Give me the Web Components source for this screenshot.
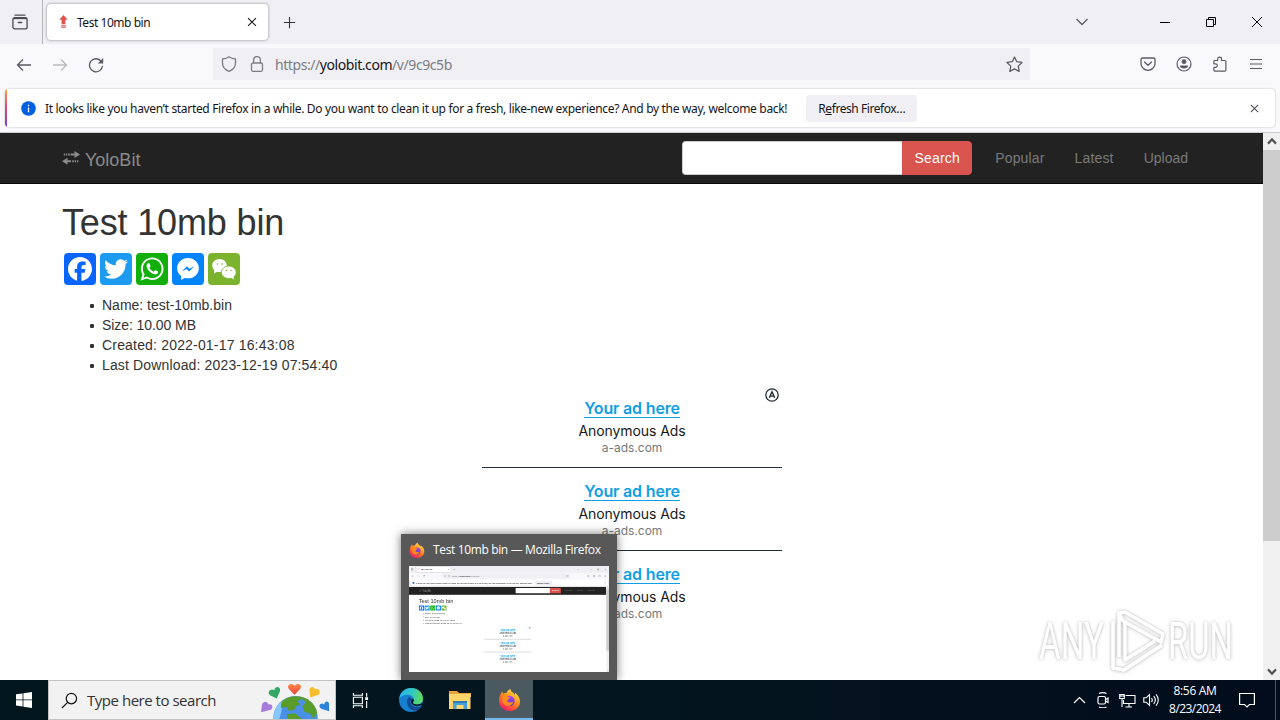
<!DOCTYPE html>
<html lang="en">
<head>
<meta charset="utf-8">
<title>Test 10mb bin</title>
<style>
    body { margin: 0; overflow: hidden; }
</style>
</head>
<body>
<win-desktop></win-desktop>

<script>
const FLAME = `
    <defs>
        <linearGradient id="a" x1=".8" y1="0" x2=".2" y2="1"><stop offset="0" stop-color="#fff04a"/><stop offset=".4" stop-color="#ff9a20"/><stop offset=".75" stop-color="#ff4a3c"/><stop offset="1" stop-color="#e31587"/></linearGradient>
        <linearGradient id="b" x1="0" y1="0" x2="0" y2="1"><stop offset="0" stop-color="#a34cf0"/><stop offset="1" stop-color="#5b36b8"/></linearGradient>
    </defs>
    <path fill="url(#a)" d="M2 8C3 6 3.500 4.600 4.600 3.400c0 1.300.4 2 1 2.500C7 5 8 5.200 8.700 5.200 9.800 3 11.500 2 13 .8c-.1 2.200 1.600 3.300 3.100 4.400.7.600 1.200 1.300 1.500 2.100.3-.9.200-1.700-.2-2.500 3.300 2.200 5.600 5.600 5.600 9.200C23 19.500 18.500 24 12 24S1 19.300 1 13.500C1 11.400 1.300 9.500 2 8z"/>
    <circle cx="12" cy="13.500" r="5.400" fill="url(#b)"/>
    <path fill="#ff8a1e" d="M4.500 9.500c2-1.700 4.300-1.400 5.700-.5 1 .7 2.300.8 2.500 1.300-.3 1-1.900 1.200-2.600 2-.5.900-.2 2 .9 2.500 2 .8 3.200-.6 4.900-.2-1 3.100-4 4.600-7 3.900-3.500-1-5.600-5-4.400-9z"/>`;

// name: [viewBox, markup]
const ICONS = {
    view: ["0 0 16 16", `<g fill="none" stroke="currentColor" stroke-width="1.300"><path d="M3 1.100h10" stroke-linecap="round"/><rect x=".9" y="3.700" width="14.200" height="11.200" rx="2"/><path d="M1 4.500h14"/><path d="M6.300 8.500h3.400" stroke-linecap="round"/></g>`],
    favicon: ["0 0 16 16", `<path fill="#d9534f" d="M8 1l4.500 5H10v5H6V6H3.500zM5.500 12h5v1.200h-5zM5.500 14h5v1h-5z"/>`],
    close: ["0 0 16 16", `<path d="M3.500 3.500l9 9m0-9l-9 9" stroke="currentColor" stroke-width="1.300"/>`],
    plus: ["0 0 16 16", `<path d="M8 2v12M2 8h12" stroke="currentColor" stroke-width="1.200"/>`],
    chevron: ["0 0 16 16", `<path d="M2.500 5l5.500 5.500L13.500 5" fill="none" stroke="currentColor" stroke-width="1.300"/>`],
    min: ["0 0 16 16", `<path d="M3 8.500h10" stroke="currentColor"/>`],
    restore: ["0 0 16 16", `<g fill="none" stroke="currentColor"><path d="M3.500 5.500h7v7h-7z"/><path d="M5.500 5.500v-2h7v7h-2"/></g>`],
    winclose: ["0 0 16 16", `<path d="M3 3l10 10m0-10L3 13" stroke="currentColor"/>`],
    back: ["0 0 16 16", `<path d="M15 8H1.500M7 2.500L1.500 8 7 13.500" fill="none" stroke="currentColor" stroke-width="1.300"/>`],
    forward: ["0 0 16 16", `<path d="M1 8h13.500M9 2.500L14.500 8 9 13.500" fill="none" stroke="currentColor" stroke-width="1.300"/>`],
    reload: ["0 0 16 16", `<path d="M13.400 4.600A6.500 6.500 0 1 0 14.500 8.700" fill="none" stroke="currentColor" stroke-width="1.300"/><path d="M15.200 1v5.500H9.700z" fill="currentColor"/>`],
    shield: ["0 0 16 16", `<path d="M8 .8C6.500 2 4 2.800 1.500 3v4c0 4 3 7 6.500 8.300C11.500 14 14.500 11 14.500 7V3C12 2.800 9.500 2 8 .8z" fill="none" stroke="currentColor" stroke-width="1.300" stroke-linejoin="round"/>`],
    lock: ["0 0 16 16", `<g fill="none" stroke="currentColor" stroke-width="1.300"><rect x="2.500" y="7" width="11" height="8.300" rx="1.500"/><path d="M4.600 7V4a3.400 3.400 0 0 1 6.800 0v3"/></g>`],
    star: ["0 0 16 16", `<path d="M8 .9l2.100 4.500 5 .7-3.600 3.400.9 5L8 12.100l-4.400 2.400.9-5L.9 6.100l5-.7z" fill="none" stroke="currentColor" stroke-width="1.200" stroke-linejoin="round"/>`],
    pocket: ["0 0 16 16", `<g fill="none" stroke="currentColor" stroke-width="1.300"><path d="M2.400 2h11.200c.8 0 1.400.6 1.400 1.400V7.500a7 6.800 0 0 1-14 0V3.400C1 2.600 1.600 2 2.400 2z"/><path d="M4.500 6l3.500 3.300L11.500 6" stroke-linecap="round"/></g>`],
    account: ["0 0 16 16", `<circle cx="8" cy="8" r="7" fill="none" stroke="currentColor" stroke-width="1.200"/><circle cx="8" cy="5.700" r="2.400" fill="currentColor"/><path d="M3.800 9.500h8.400c0 1.800-1.800 3-4.200 3s-4.200-1.200-4.200-3z" fill="currentColor"/>`],
    puzzle: ["0 0 16 16", `<path d="M2 4.500h3.700V3a1.900 1.900 0 0 1 3.800 0v1.500h3.300c.6 0 1.100.5 1.100 1.100V14c0 .6-.5 1.100-1.100 1.100H3c-.6 0-1.100-.5-1.100-1.100v-2.600h1.600a1.800 1.800 0 0 0 0-3.600H1.900V4.500" fill="none" stroke="currentColor" stroke-width="1.200" stroke-linejoin="round"/>`],
    menu: ["0 0 16 16", `<path d="M2 3.500h12M2 8h12M2 12.500h12" stroke="currentColor" stroke-width="1.200"/>`],
    info: ["0 0 16 16", `<circle cx="8" cy="8" r="7.800" fill="#0060df"/><path d="M7.300 7h1.400v5H7.300zM7.300 4h1.400v1.500H7.300z" fill="#fff"/>`],
    arrows: ["0 0 18 14", `<g fill="currentColor"><path d="M12.500 0L18 3.500l-5.500 3.500V4.500H8.500v-2h4zM6 2.500h1.600v2H6zM3.800 2.500h1.400v2H3.800zM1.800 2.500H3v2H1.800z"/><path d="M5.500 6.800L0 10.300l5.500 3.500v-2.500h3.500v-2H5.500zM10.300 9.300h1.600v2h-1.600zM12.700 9.300h1.400v2h-1.400zM15 9.300h1.300v2H15z"/></g>`],
    facebook: ["0 0 32 32", `<path fill="#fff" d="M28 16c0-6.627-5.373-12-12-12S4 9.373 4 16c0 5.628 3.875 10.350 9.101 11.647v-7.980h-2.474V16H13.100v-1.580c0-4.085 1.849-5.978 5.859-5.978.76 0 2.072.15 2.608.298v3.325c-.283-.03-.775-.045-1.386-.045-1.967 0-2.728.745-2.728 2.683V16h3.920l-.673 3.667h-3.247v8.245C23.395 27.195 28 22.135 28 16z"/>`],
    twitter: ["0 0 32 32", `<path fill="#fff" d="M28 8.557a10 10 0 0 1-2.828.775 4.930 4.930 0 0 0 2.166-2.725 9.700 9.700 0 0 1-3.130 1.194 4.920 4.920 0 0 0-3.593-1.550 4.924 4.924 0 0 0-4.794 6.049c-4.090-.21-7.720-2.170-10.150-5.150a4.940 4.940 0 0 0-.665 2.477c0 1.710.87 3.214 2.190 4.100a5 5 0 0 1-2.230-.616v.06c0 2.390 1.700 4.380 3.952 4.830-.414.115-.85.174-1.297.174q-.476-.001-.928-.086a4.935 4.935 0 0 0 4.600 3.420 9.900 9.900 0 0 1-6.114 2.107q-.597 0-1.175-.067a13.950 13.950 0 0 0 7.550 2.213c9.056 0 14.010-7.507 14.010-14.013q0-.32-.015-.637c.96-.695 1.795-1.560 2.455-2.550z"/>`],
    whatsapp: ["0 0 32 32", `<path fill="#fff" fill-rule="evenodd" d="M16.210 4.410C9.973 4.410 4.917 9.465 4.917 15.700c0 2.134.592 4.130 1.620 5.832L4.500 27.590l6.250-2.002a11.240 11.240 0 0 0 5.460 1.404c6.234 0 11.290-5.055 11.290-11.290 0-6.237-5.056-11.292-11.290-11.292zm0 20.690c-1.910 0-3.690-.57-5.173-1.553l-3.610 1.156 1.173-3.490a9.350 9.350 0 0 1-1.790-5.512c0-5.180 4.217-9.400 9.400-9.400s9.397 4.220 9.397 9.400c0 5.188-4.214 9.400-9.398 9.400z"/><path fill="#fff" d="M21.500 18.268c-.284-.155-1.673-.906-1.934-1.012-.265-.106-.455-.16-.658.12s-.78.91-.954 1.096c-.176.186-.345.203-.628.048-.282-.154-1.200-.494-2.264-1.517-.83-.795-1.373-1.760-1.530-2.055s0-.445.15-.584c.134-.124.3-.326.45-.488.15-.163.203-.28.306-.47.104-.19.06-.36-.005-.506-.066-.147-.59-1.587-.81-2.173-.218-.586-.46-.498-.63-.505-.168-.007-.358-.038-.55-.045-.19-.007-.51.054-.78.332-.277.274-1.050.943-1.100 2.362-.055 1.418.926 2.826 1.064 3.023.137.2 1.874 3.272 4.760 4.537 2.888 1.264 2.900.878 3.430.85.53-.027 1.734-.633 2-1.297s.287-1.240.22-1.363c-.07-.123-.26-.203-.54-.357z"/>`],
    messenger: ["0 0 32 32", `<path fill="#fff" d="M16 5C9.986 5 5.110 9.560 5.110 15.182c0 3.200 1.580 6.054 4.046 7.920V27l3.716-2.060c.99.276 2.040.425 3.128.425 6.014 0 10.890-4.560 10.890-10.183S22.013 5 16 5z"/><path fill="#0084ff" d="M9.900 18.500l5-5.200 2.600 2.500 4.800-2.500-5.100 5.200-2.500-2.500z"/>`],
    wechat: ["0 0 32 32", `<g fill="#fff"><ellipse cx="11.500" cy="12.500" rx="7.300" ry="6.600"/><path d="M6.500 16.500l-.6 4 4-2z"/><g stroke="#7bb32e" stroke-width=".8"><ellipse cx="20.800" cy="19.300" rx="7.400" ry="6.300"/></g><path d="M22.500 24.500l3.500 2-.8-4z"/></g><g fill="#7bb32e"><circle cx="9.400" cy="11" r=".8"/><circle cx="14" cy="11" r=".8"/><circle cx="18.500" cy="17.500" r=".7"/><circle cx="23.100" cy="17.500" r=".7"/></g>`],
    aads: ["0 0 14 14", `<g fill="none" stroke="#222b31" stroke-width="1.300"><circle cx="7" cy="7" r="6.200"/><path d="M4.300 9.800L7 3.800l2.700 6M5.300 8.100h3.400" stroke-width="1.400"/></g>`],
    scrollup: ["0 0 16 16", `<path d="M4 10l4-4 4 4" fill="none" stroke="#505050" stroke-width="2"/>`],
    scrolldown: ["0 0 16 16", `<path d="M4 6l4 4 4-4" fill="none" stroke="#505050" stroke-width="2"/>`],
    start: ["0 0 16 16", `<path fill="#fff" d="M0 2.300l6.600-.9v6.100H0zM7.400 1.300L16 0v7.500H7.400zM0 8.300h6.600v6.200L0 13.600zM7.400 8.300H16V16l-8.600-1.300z"/>`],
    search: ["0 0 18 18", `<g fill="none" stroke="#111" stroke-width="1.300"><circle cx="11" cy="7" r="5.500"/><path d="M7 11l-6 6"/></g>`],
    taskview: ["0 0 18 18", `<g fill="none" stroke="#fff" stroke-width="1.200"><path d="M1.500 5.500h9.500v7H1.500zM1.500 1v2.500H11V1M1.500 17v-2.500H11V17M15.500 1v4M15.500 9.500V17"/></g><path d="M14 5.500h3v3h-3z" fill="#fff"/>`],
    edge: ["0 0 24 24", `<defs><linearGradient id="a" x1="0" y1=".3" x2="1" y2=".5"><stop offset="0" stop-color="#2bb5f0"/><stop offset=".5" stop-color="#30c8c4"/><stop offset="1" stop-color="#62dc5a"/></linearGradient></defs><circle cx="12" cy="12" r="12" fill="#1680d0"/><path fill="url(#a)" d="M.2 10.500C1.200 4.500 6 0 12 0c7 0 12 5 12 10.300 0 4-3 6.200-6.300 6.200-2.800 0-4-1-4-1.700 0-.7 1.200-1.300 1.200-3C14.900 9 12 6.800 8.600 6.800 4.500 6.800 1.300 9 .2 10.500z"/><path fill="#124a92" d="M9.600 9.400c-3.200 3.400-1.700 10.400 4 12.800 3.200 1 6.300-.5 8.800-4.300-5 2.700-11 .7-11-4.300 0-1.500.6-2.800 1.500-3.400-1-.9-2.300-1.100-3.300-.8z"/><path fill="#02141c" d="M13 11c-1.200 1-1.400 2.400-.7 4 1.500 3.200 6.300 4.100 10.200 2.100l1.700.2v-3c-1.300 1.600-3.700 2.400-6.300 2.200-2.800 0-4-1-4-1.700 0-.8 1.200-1.400 1-3.300z"/>`],
    folder: ["0 0 22 18", `<path fill="#e8a33c" d="M0 0h8l2 2h12v4H0z"/><path fill="#fcd56b" d="M0 3h21.500v15H0z"/><path fill="#4aa0d8" d="M4 10h14v8h-3.500v-4h-7v4H4z"/><path fill="#2d7db5" d="M4 10h14v2H4z"/>`],
    firefox: ["0 0 24 24", FLAME],
    globe: ["0 0 76 39", `
        <defs><linearGradient id="h" x1="0" y1="0" x2="0" y2="1"><stop offset="0" stop-color="#ff8a4c"/><stop offset="1" stop-color="#e8413c"/></linearGradient></defs>
        <circle cx="36" cy="38" r="22.500" fill="#4a90e8"/><path fill="#86c7ff" d="M14 35a22 22 0 0 1 12-17c-5 6-3 14-7 22h-5.300z"/>
        <path fill="#5a9c2a" d="M22 21c4-3.500 9-5.400 15-5.400 12 .4 19 8 21 17l-4 6-3-5-6-2-2-6 4-4-5-3-4 2 3 4-5 1-1 4-6 1-2-4-6 1zM27 34l8-1 4 3 3 3H28z"/>
        <path fill="url(#h)" d="M35 14L29.500 8.500C26 4 32 .8 35 5c3-4.200 9-1 5.500 3.500z"/>
        <path fill="#31a866" d="M17 18l-6.500-3c-4-3 0-8 4-5.500.7-4.800 6.700-4 5.800.8z"/>
        <path fill="#f8bd2c" d="M51 17l-1-8c.8-4 5-3.600 6-.4C59 7 62 10 59.500 14z"/>
        <path fill="#a77bdc" d="M1 32l1-8c1.500-4 6-3.200 6.200 0 4-1 6 2.600 3 5.500z"/>
        <path fill="#2b84d8" d="M70 31l-8-2.500c-4-3 0-7 3-4.500.7-4.500 5-3.500 5-.5z"/>`],
    tray: ["0 0 13 8", `<path d="M1 7l5.500-5.500L12 7" fill="none" stroke="#fff" stroke-width="1.200"/>`],
    camera: ["0 0 16 16", `<g fill="none" stroke="#fff" stroke-width="1.200"><rect x="3" y="4.500" width="7.500" height="7.500" rx="1.500"/><path d="M10.500 7.500l2.500-1.500v4.500L10.500 9"/><path d="M4 1.500c2.500-1.200 5-1.200 7.500 0M4 15c2.500 1.200 5 1.200 7.500 0"/></g>`],
    network: ["0 0 17 15", `<g fill="none" stroke="#fff" stroke-width="1.100"><path d="M6.500 2.500H16v8H4.500V7M10 10.500V14M6.500 14H13"/><path d="M.7 1.500h4.600v4H.7zM2 1.500V4M4 1.500V4M3 5.500V14"/></g>`],
    volume: ["0 0 17 14", `<g fill="none" stroke="#fff" stroke-width="1.100"><path d="M.8 4.800h2.400L6.500 1.500v11L3.200 9.200H.8z"/><path d="M8.500 5c1 1.200 1 2.800 0 4M10.700 3.200c2 2.300 2 5.300 0 7.600M13 1.400c3 3.300 3 7.900 0 11.200"/></g>`],
    bell: ["0 0 16 16", `<path d="M.6 1.500h14.800v11H10.500L8 15l-2.500-2.500H.6z" fill="none" stroke="#fff" stroke-width="1.200"/>`]
};

class UiIcon extends HTMLElement {
    connectedCallback() {
        if (this.shadowRoot) return;
        const [box, body] = ICONS[this.getAttribute("name")];
        const [, , w, h] = box.split(" ");
        const width = this.getAttribute("w") || w;
        const height = this.getAttribute("h") || width * h / w;
        this.attachShadow({ mode: "open" }).innerHTML = `
            <style>
                :host { display: inline-block; flex: none; line-height: 0; }
                svg { display: block; }
            </style>
            <svg width="${width}" height="${height}" viewBox="${box}" preserveAspectRatio="none">${body}</svg>
        `;
    }
}

// One line of text, tracked so that it takes up "w" pixels
class FitText extends HTMLElement {
    connectedCallback() {
        if (this.shadowRoot) return;
        this.attachShadow({ mode: "open" }).innerHTML = `
            <style>
                :host { display: inline-block; flex: none; white-space: nowrap; }
            </style>
            <slot></slot>
        `;
        const n = this.textContent.length;
        const extra = Number(this.getAttribute("w")) - this.offsetWidth;
        this.style.letterSpacing = `${(extra / n).toFixed(3)}px`;
    }
}

class TabStrip extends HTMLElement {
    connectedCallback() {
        this.attachShadow({ mode: "open" }).innerHTML = `
            <style>
                :host { display: flex; height: 44px; background: #f0f0f4; color: #15141a; box-sizing: border-box; padding-right: 15px; align-items: center; }
                .view { width: 43px; height: 44px; border-right: 1px solid #b5b5bc; display: flex; align-items: center; justify-content: center; color: #4a4a52; box-sizing: border-box; padding-right: 2px; }
                .tab { width: 221px; height: 36px; margin: 0 0 1px 4px; background: #fff; border-radius: 4px; box-shadow: 0 0 3px rgba(0, 0, 0, .45); display: flex; align-items: center; box-sizing: border-box; padding: 0 9px; font-size: 12px; }
                .tab fit-text { margin-left: 6px; padding-top: 2px; }
                .tab .x { margin-left: auto; }
                .new { margin-left: 14px; color: #33333a; }
                .list { margin-left: auto; margin-right: 67px; color: #5b5b66; }
                .win { display: flex; gap: 30px; color: #000; }
            </style>
            <div class="view"><ui-icon name="view" w="16"></ui-icon></div>
            <div class="tab">
                <ui-icon name="favicon" w="15"></ui-icon>
                <fit-text w="73">Test 10mb bin</fit-text>
                <ui-icon class="x" name="close" w="14"></ui-icon>
            </div>
            <ui-icon class="new" name="plus" w="15"></ui-icon>
            <ui-icon class="list" name="chevron" w="16"></ui-icon>
            <div class="win">
                <ui-icon name="min" w="16"></ui-icon>
                <ui-icon name="restore" w="16"></ui-icon>
                <ui-icon name="winclose" w="16"></ui-icon>
            </div>
        `;
    }
}

class NavBar extends HTMLElement {
    connectedCallback() {
        this.attachShadow({ mode: "open" }).innerHTML = `
            <style>
                :host { display: flex; height: 44px; background: #f9f9fb; color: #5b5b66; align-items: center; box-sizing: border-box; padding: 0 16px 4px; }
                .nav { display: flex; gap: 20px; width: 197px; flex: none; padding-top: 1px; }
                .off { opacity: .4; }
                .url { width: 817px; height: 32px; box-sizing: border-box; background: #f0f0f4; display: flex; align-items: center; padding: 0 7px 0 8px; font-size: 14px; color: #7c7c84; }
                .url .lock { margin: 0 10px 0 12px; }
                .url b { font-weight: normal; color: #15141a; }
                .url fit-text { padding-top: 1px; }
                .url .star { margin-left: auto; color: #5b5b66; }
                .tools { margin-left: auto; display: flex; gap: 20px; }
            </style>
            <div class="nav">
                <ui-icon name="back" w="16"></ui-icon>
                <ui-icon class="off" name="forward" w="16"></ui-icon>
                <ui-icon name="reload" w="16"></ui-icon>
            </div>
            <div class="url">
                <ui-icon name="shield" w="16"></ui-icon>
                <ui-icon class="lock" name="lock" w="16"></ui-icon>
                <fit-text w="177">https://<b>yolobit.com</b>/v/9c9c5b</fit-text>
                <ui-icon class="star" name="star" w="17"></ui-icon>
            </div>
            <div class="tools">
                <ui-icon name="pocket" w="16"></ui-icon>
                <ui-icon name="account" w="16"></ui-icon>
                <ui-icon name="puzzle" w="16"></ui-icon>
                <ui-icon name="menu" w="16"></ui-icon>
            </div>
        `;
    }
}

class NoticeBar extends HTMLElement {
    connectedCallback() {
        this.attachShadow({ mode: "open" }).innerHTML = `
            <style>
                :host { display: block; height: 45px; box-sizing: border-box; background: #f9f9fb; border-bottom: 1px solid #ccccd0; padding: 1px 5px 0; }
                .card { height: 38px; background: #fff; border-radius: 4px; box-shadow: 0 0 2px rgba(0, 0, 0, .3); display: flex; align-items: center; font-size: 12px; color: #15141a; padding-right: 14px; overflow: hidden; }
                .bar { width: 2px; height: 100%; background: linear-gradient(#ffa436, #e5457a 45%, #7c3fd0); }
                .info { margin: 0 9px 0 14px; }
                .btn { margin-left: 19px; width: 111px; height: 27px; border-radius: 4px; background: #f0f0f4; display: flex; align-items: center; justify-content: center; }
                .x { margin-left: auto; color: #4a4a52; }
            </style>
            <div class="card">
                <div class="bar"></div>
                <ui-icon class="info" name="info" w="15"></ui-icon>
                <fit-text w="742">It looks like you haven’t started Firefox in a while. Do you want to clean it up for a fresh, like-new experience? And by the way, welcome back!</fit-text>
                <div class="btn"><fit-text w="87">R<u>e</u>fresh Firefox…</fit-text></div>
                <ui-icon class="x" name="close" w="13"></ui-icon>
            </div>
        `;
    }
}

class SiteHeader extends HTMLElement {
    connectedCallback() {
        this.attachShadow({ mode: "open" }).innerHTML = `
            <style>
                :host { display: flex; height: 51px; box-sizing: border-box; background: #222; border-bottom: 1px solid #080808; color: #7a7a7a; align-items: center; padding: 0 75px 0 62px; font-size: 14px; }
                .brand { display: flex; align-items: center; gap: 5px; font-size: 18px; color: #8a8a8a; }
                .brand fit-text { padding-top: 3px; }
                form { display: flex; margin: 0 23px 0 auto; }
                .field { width: 220px; height: 34px; box-sizing: border-box; background: #fff; border: 1px solid #ccc; border-right: 0; border-radius: 4px 0 0 4px; }
                .go { width: 70px; height: 34px; box-sizing: border-box; background: #d9534f; border: 1px solid #d9534f; border-radius: 0 4px 4px 0; color: #fff; display: flex; align-items: center; justify-content: center; }
                nav { display: flex; gap: 30px; }
            </style>
            <div class="brand"><ui-icon name="arrows" w="18"></ui-icon><fit-text w="55">YoloBit</fit-text></div>
            <form>
                <div class="field"></div>
                <div class="go"><fit-text w="45">Search</fit-text></div>
            </form>
            <nav>
                <fit-text w="49">Popular</fit-text>
                <fit-text w="39">Latest</fit-text>
                <fit-text w="44">Upload</fit-text>
            </nav>
        `;
    }
}

class ShareButton extends HTMLElement {
    connectedCallback() {
        this.attachShadow({ mode: "open" }).innerHTML = `
            <style>
                :host { display: block; width: 32px; height: 32px; border-radius: 4px; background: ${this.getAttribute("color")}; }
            </style>
            <ui-icon name="${this.getAttribute("name")}" w="32"></ui-icon>
        `;
    }
}

class AdCard extends HTMLElement {
    connectedCallback() {
        this.attachShadow({ mode: "open" }).innerHTML = `
            <style>
                :host { display: flex; flex-direction: column; align-items: center; height: 83px; box-sizing: border-box; padding-top: 14px; border-bottom: 1px solid #222b31; font-family: Inter, Roboto, sans-serif; color: #15191c; }
                :host([last]) { border-bottom-color: transparent; }
                .title { font-size: 16px; line-height: 18px; font-weight: 600; color: #0f9fe6; border-bottom: 1px solid #0f9fe6; height: 18px; }
                .name { font-size: 14px; line-height: 18px; margin-top: 4px; }
                .site { font-size: 12px; line-height: 15px; color: #75797c; }
            </style>
            <fit-text class="title" w="96">Your ad here</fit-text>
            <fit-text class="name" w="107">Anonymous Ads</fit-text>
            <fit-text class="site" w="61">a-ads.com</fit-text>
        `;
    }
}

class FilePage extends HTMLElement {
    connectedCallback() {
        this.attachShadow({ mode: "open" }).innerHTML = `
            <style>
                :host { display: block; flex: 1; background: #fff; color: #333; font: 14px/20px "Liberation Sans", Arial, sans-serif; overflow: hidden; }
                main { padding: 19px 62px 0; display: flex; flex-direction: column; }
                h1 { font-size: 36px; line-height: 40px; height: 40px; margin: 0 0 10px; font-weight: normal; }
                .share { display: flex; gap: 4px; margin-left: 2px; }
                ul { margin: 10px 0 10px; padding-left: 40px; list-style: none; }
                li { display: flex; align-items: center; height: 20px; }
                li::before { content: ""; width: 4px; height: 4px; margin: 2px 8px 0 -12px; background: #333; border-radius: 1px; }
                .ads { width: 300px; margin-left: 420px; position: relative; }
                .mark { position: absolute; right: 3px; top: 3px; }
            </style>
            <site-header></site-header>
            <main>
                <h1><fit-text w="222">Test 10mb bin</fit-text></h1>
                <div class="share">
                    <share-button name="facebook" color="#0866ff"></share-button>
                    <share-button name="twitter" color="#1d9bf0"></share-button>
                    <share-button name="whatsapp" color="#12af0a"></share-button>
                    <share-button name="messenger" color="#0084ff"></share-button>
                    <share-button name="wechat" color="#7bb32e"></share-button>
                </div>
                <ul>
                    <li><fit-text w="130">Name: test-10mb.bin</fit-text></li>
                    <li><fit-text w="94">Size: 10.00 MB</fit-text></li>
                    <li><fit-text w="193">Created: 2022-01-17 16:43:08</fit-text></li>
                    <li><fit-text w="235">Last Download: 2023-12-19 07:54:40</fit-text></li>
                </ul>
                <div class="ads">
                    <ad-card></ad-card>
                    <ad-card></ad-card>
                    <ad-card last></ad-card>
                    <ui-icon class="mark" name="aads" w="14"></ui-icon>
                </div>
            </main>
        `;
    }
}

class ScrollBar extends HTMLElement {
    connectedCallback() {
        this.attachShadow({ mode: "open" }).innerHTML = `
            <style>
                :host { display: flex; flex-direction: column; width: 17px; background: #f0f0f0; align-items: center; }
                .thumb { width: 17px; height: 391px; background: #cdcdcd; }
                .down { margin-top: auto; }
            </style>
            <ui-icon name="scrollup" w="16" h="17"></ui-icon>
            <div class="thumb"></div>
            <ui-icon class="down" name="scrolldown" w="16" h="17"></ui-icon>
        `;
    }
}

class BrowserWindow extends HTMLElement {
    connectedCallback() {
        this.attachShadow({ mode: "open" }).innerHTML = `
            <style>
                :host { display: flex; flex-direction: column; width: 1280px; height: 680px; background: #fff; font-family: "Noto Sans", "Open Sans", sans-serif; }
                .view { display: flex; flex: 1; min-height: 0; }
            </style>
            <tab-strip></tab-strip>
            <nav-bar></nav-bar>
            <notice-bar></notice-bar>
            <div class="view">
                <file-page></file-page>
                <scroll-bar></scroll-bar>
            </div>
        `;
    }
}

class WindowPreview extends HTMLElement {
    connectedCallback() {
        this.attachShadow({ mode: "open" }).innerHTML = `
            <style>
                :host { display: block; width: 216px; height: 146px; box-sizing: border-box; padding: 0 8px; background: #585858; box-shadow: 0 0 9px rgba(0, 0, 0, .55); color: #fff; font: 12px "Open Sans", "Noto Sans", sans-serif; }
                header { display: flex; align-items: center; height: 32px; gap: 8px; }
                header fit-text { padding-bottom: 2px; }
                .shot { width: 200px; height: 106px; overflow: hidden; background: #fff; }
                browser-window { transform: scale(.15625); transform-origin: 0 0; }
            </style>
            <header><ui-icon name="firefox" w="16"></ui-icon><fit-text w="168">Test 10mb bin — Mozilla Firefox</fit-text></header>
            <div class="shot" aria-hidden="true"><browser-window></browser-window></div>
        `;
    }
}

class TaskBar extends HTMLElement {
    connectedCallback() {
        this.attachShadow({ mode: "open" }).innerHTML = `
            <style>
                :host { display: flex; height: 40px; background: linear-gradient(90deg, #02161d, #03151f 50%, #020c1c); color: #fff; align-items: stretch; font: 12px "Open Sans", "Noto Sans", sans-serif; }
                .cell { width: 48px; display: flex; align-items: center; justify-content: center; }
                .search { width: 288px; box-sizing: border-box; background: #f2f2f2; border: 1px solid #c4c4c4; display: flex; align-items: center; padding-left: 12px; color: #333; font-size: 15px; }
                .search fit-text { margin-left: 9px; }
                .search .art { margin: 0 0 0 auto; }
                .apps { display: flex; gap: 1px; }
                .apps .cell:first-child { margin-right: 2px; }
                .apps .on { background: #4b5960; box-sizing: border-box; border-bottom: 2px solid #76b9ed; }
                .tray { display: flex; align-items: center; margin-left: auto; }
                .slot { width: 24px; display: flex; justify-content: center; }
                .clock { width: 52px; display: flex; flex-direction: column; align-items: center; line-height: 18px; margin: 0 18px 0 6px; }
                .end { border-left: 1px solid #4a5563; width: 4px; height: 40px; margin-left: 20px; }
            </style>
            <div class="cell"><ui-icon name="start" w="16"></ui-icon></div>
            <div class="search">
                <ui-icon name="search" w="17"></ui-icon>
                <fit-text w="129">Type here to search</fit-text>
                <ui-icon class="art" name="globe" w="75" h="38"></ui-icon>
            </div>
            <div class="apps">
                <div class="cell"><ui-icon name="taskview" w="17"></ui-icon></div>
                <div class="cell"><ui-icon name="edge" w="24"></ui-icon></div>
                <div class="cell"><ui-icon name="folder" w="22"></ui-icon></div>
                <div class="cell on"><ui-icon name="firefox" w="23"></ui-icon></div>
            </div>
            <div class="tray">
                <div class="slot"><ui-icon name="tray" w="13"></ui-icon></div>
                <div class="slot"><ui-icon name="camera" w="16"></ui-icon></div>
                <div class="slot"><ui-icon name="network" w="17"></ui-icon></div>
                <div class="slot"><ui-icon name="volume" w="17"></ui-icon></div>
                <div class="clock"><fit-text w="43">8:56 AM</fit-text><fit-text w="52">8/23/2024</fit-text></div>
                <ui-icon name="bell" w="16"></ui-icon>
                <div class="end"></div>
            </div>
        `;
    }
}

class WaterMark extends HTMLElement {
    connectedCallback() {
        this.attachShadow({ mode: "open" }).innerHTML = `
            <style>
                :host { display: block; line-height: 0; filter: drop-shadow(0 0 1.5px rgba(0, 0, 0, .22)) drop-shadow(0 1px 2px rgba(0, 0, 0, .1)); }
                svg { overflow: visible; }
                text { font: 52px Roboto, sans-serif; fill: #fff; }
            </style>
            <svg width="220" height="70" viewBox="0 0 220 70">
                <text x="2" y="50" textLength="65" lengthAdjust="spacingAndGlyphs">ANY</text>
                <text x="131" y="50" textLength="65" lengthAdjust="spacingAndGlyphs">RUN</text>
                <g fill="none" stroke="#fff" stroke-width="3.500" stroke-linejoin="round">
                    <path d="M88 12v39l30-19"/>
                    <path d="M76 12v47l11 2 38-25M82 4v44M82 4l6-1 38 22-2 8-38-21z"/>
                </g>
            </svg>
        `;
    }
}

class WinDesktop extends HTMLElement {
    connectedCallback() {
        this.attachShadow({ mode: "open" }).innerHTML = `
            <style>
                :host { display: flex; flex-direction: column; width: 1280px; height: 720px; overflow: hidden; position: relative; }
                window-preview { position: absolute; left: 401px; top: 534px; }
                water-mark { position: absolute; left: 1037px; top: 609px; }
                task-bar { position: relative; }
            </style>
            <browser-window></browser-window>
            <window-preview></window-preview>
            <water-mark></water-mark>
            <task-bar></task-bar>
        `;
    }
}

customElements.define("win-desktop", WinDesktop);
customElements.define("browser-window", BrowserWindow);
customElements.define("window-preview", WindowPreview);
customElements.define("tab-strip", TabStrip);
customElements.define("nav-bar", NavBar);
customElements.define("notice-bar", NoticeBar);
customElements.define("file-page", FilePage);
customElements.define("scroll-bar", ScrollBar);
customElements.define("site-header", SiteHeader);
customElements.define("share-button", ShareButton);
customElements.define("ad-card", AdCard);
customElements.define("task-bar", TaskBar);
customElements.define("water-mark", WaterMark);
customElements.define("ui-icon", UiIcon);
// measures its own width, so it goes last
customElements.define("fit-text", FitText);
</script>
</body>
</html>
